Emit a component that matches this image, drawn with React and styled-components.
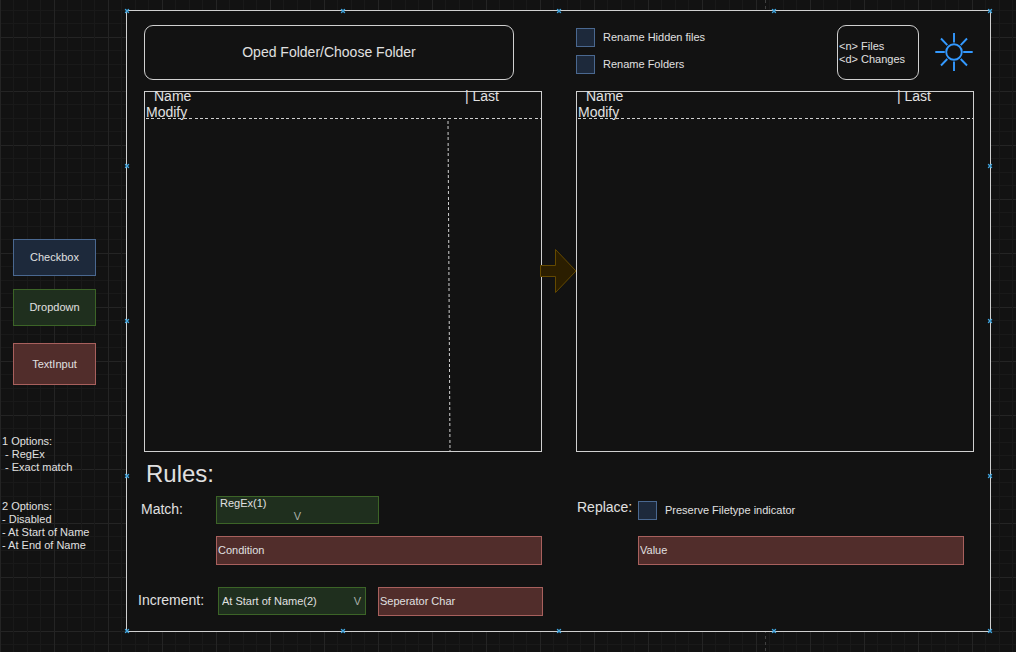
import React from "react";
import styled, { createGlobalStyle, css } from "styled-components";

const ink = "#e0e0e0";
const line = "#d0d0d0";
const canvas = "#121212";

const tones = {
  blue: { fill: "#1d293b", stroke: "#4a6890" },
  green: { fill: "#1f2f1e", stroke: "#3c6427" },
  red: { fill: "#512d2b", stroke: "#a8605d" },
};

const GlobalStyle = createGlobalStyle`
  *, *::before, *::after { box-sizing: border-box; }
  body {
    margin: 0;
    background: ${canvas};
    color: ${ink};
    font: 11px/13px "Liberation Sans", Arial, sans-serif;
  }
  button, input, select { font: inherit; color: inherit; margin: 0; border-radius: 0; }
`;

const gridLines = (direction) => css`
  linear-gradient(
    ${direction},
    #242424 0 1px, transparent 1px 13px,
    #191919 13px 14px, transparent 14px 27px,
    #191919 27px 28px, transparent 28px 40px,
    #191919 40px 41px, transparent 41px
  )
`;

const dashes = (direction) => css`
  repeating-linear-gradient(
    ${direction},
    ${line} 0 3px, transparent 3px 5px,
    ${line} 5px 8px, transparent 8px 11px,
    ${line} 11px 14px, transparent 14px 16px,
    ${line} 16px 19px, transparent 19px 22px,
    ${line} 22px 25px, transparent 25px 27px
  )
`;

const Page = styled.div`
  display: flex;
  min-height: 100vh;
  padding: 10px 25px 20px 0;
  background:
    repeating-linear-gradient(#404040 0 3px, transparent 3px 6px) 765px 0 / 1px 100% no-repeat,
    ${gridLines("to right")} 0 0 / 54px 54px,
    ${gridLines("to bottom")} 0 37px / 54px 54px,
    ${canvas};
`;

const Legend = styled.aside`
  flex: none;
  width: 126px;
  padding-top: 229px;
`;

const Swatch = styled.div`
  display: flex;
  align-items: center;
  justify-content: center;
  width: 83px;
  height: ${(p) => (p.$tall ? 42 : 37)}px;
  margin: 0 0 ${(p) => p.$after}px 13px;
  background: ${(p) => tones[p.$tone].fill};
  border: 1px solid ${(p) => tones[p.$tone].stroke};
`;

const Note = styled.p`
  margin: 0 0 26px 2px;
  white-space: pre;
`;

const Frame = styled.main`
  position: relative;
  flex: 1;
  display: flex;
  flex-direction: column;
  padding: 14px 16px 15px 17px;
  background: ${canvas};
  border: 1px solid ${line};
`;

const HandleMark = styled.svg`
  position: absolute;
  left: ${(p) => p.$x}%;
  top: ${(p) => p.$y}%;
  width: 5px;
  height: 5px;
  transform: translate(-50%, -50%);
`;

const Columns = styled.div`
  position: relative;
  display: grid;
  grid-template-columns: 1fr 1fr;
  column-gap: 34px;
  ${(p) => p.$grow && "flex: 1; min-height: 240px;"}
`;

const OpenButton = styled.button`
  width: 370px;
  max-width: 100%;
  height: 55px;
  padding: 0;
  background: transparent;
  border: 1px solid ${line};
  border-radius: 9px;
  font-size: 14px;
`;

const Toolbar = styled.div`
  display: flex;
  align-items: flex-start;
  margin-bottom: 11px;
`;

const Checks = styled.div`
  display: grid;
  gap: 8px;
  margin-right: auto;
  padding-top: 3px;
`;

const CheckLabel = styled.label`
  display: flex;
  align-items: center;
  gap: 8px;
`;

const Check = styled.input.attrs({ type: "checkbox" })`
  appearance: none;
  flex: none;
  width: 19px;
  height: 19px;
  background: ${tones.blue.fill};
  border: 1px solid ${tones.blue.stroke};
  &:checked { background: ${tones.blue.stroke}; }
`;

const Stats = styled.div`
  display: flex;
  flex-direction: column;
  justify-content: center;
  width: 82px;
  height: 55px;
  padding-left: 1px;
  border: 1px solid ${line};
  border-radius: 9px;
`;

const ThemeButton = styled.button`
  display: grid;
  place-items: center;
  width: 40px;
  height: 54px;
  margin-left: 15px;
  padding: 0;
  background: none;
  border: 0;
`;

const Panel = styled.section`
  display: flex;
  flex-direction: column;
  border: 1px solid ${line};
`;

const PanelHead = styled.header`
  display: grid;
  grid-template-columns: 1fr 76px;
  height: 27px;
  padding-left: 1px;
  font-size: 14px;
  line-height: 16px;
  background: ${dashes("to right")} 1px 26px / 100% 1px no-repeat;
`;

const NameHead = styled.span`
  padding-left: 8px;
  margin-top: -4px;
`;

const LastHead = styled.span`
  margin-top: -4px;
`;

const PanelBody = styled.div`
  flex: 1;
  display: flex;
  justify-content: flex-end;
  padding-right: 90px;
`;

const Divider = styled.svg`
  width: 4px;
  height: 100%;
`;

const Arrow = styled.svg`
  position: absolute;
  left: 50%;
  top: 50%;
  width: 38px;
  height: 46px;
  transform: translate(-50%, -50%);
`;

const Title = styled.h1`
  margin: 8px 0 8px 2px;
  font-size: 24px;
  line-height: 28px;
  font-weight: 400;
`;

const Rule = styled.div`
  display: grid;
  grid-template-columns: ${(p) => p.$label}px 1fr;
  grid-template-rows: 28px auto;
  align-content: start;
  row-gap: 12px;
  margin-left: ${(p) => (p.$outdent ? -3 : 0)}px;
  margin-right: ${(p) => p.$inset || 0}px;
`;

const RuleLabel = styled.label`
  font-size: 14px;
  line-height: 16px;
  padding-top: ${(p) => p.$top}px;
`;

const RuleGroup = styled.span`
  font-size: 14px;
  line-height: 16px;
  padding: 3px 0 0 1px;
`;

const Field = styled.input.attrs({ type: "text" })`
  grid-column: 2;
  width: 100%;
  min-width: 0;
  height: 29px;
  padding: 0 1px 1px;
  background: ${tones.red.fill};
  border: 1px solid ${tones.red.stroke};
  outline: 0;
  &::placeholder { color: ${ink}; opacity: 1; }
`;

const SelectBox = styled.div`
  position: relative;
  width: ${(p) => p.$width}px;
  height: 28px;
`;

const Select = styled.select`
  appearance: none;
  width: 100%;
  height: 100%;
  padding: 0 0 ${(p) => (p.$raised ? 13 : 0)}px 3px;
  background: ${tones.green.fill};
  border: 1px solid ${tones.green.stroke};
  outline: 0;
`;

const Caret = styled.span`
  position: absolute;
  right: ${(p) => (p.$low ? 78 : 5)}px;
  bottom: ${(p) => (p.$low ? 1 : 7)}px;
  color: #a9b0a8;
  pointer-events: none;
`;

const IncrementRow = styled.div`
  display: grid;
  grid-template-columns: 80px 148px 165px;
  justify-content: start;
  margin: 22px 0 0 -6px;
`;

const SeparatorSlot = styled.div`
  margin-left: 12px;
  width: 165px;
`;

const steps = [0, 25, 50, 75, 100];
const handles = steps.flatMap((a) =>
  steps.filter((b) => a % 100 === 0 || b % 100 === 0).map((b) => [a, b])
);

function Handle({ x, y }) {
  return (
    <HandleMark $x={x} $y={y} viewBox="0 0 5 5" aria-hidden="true">
      <path d="M.5 .5L4.5 4.5M4.5 .5L.5 4.5" stroke="#3fa3dc" strokeWidth="1.4" />
    </HandleMark>
  );
}

function Sun() {
  return (
    <svg width="40" height="40" viewBox="0 0 40 40" fill="none" stroke="#3399ff" strokeWidth="1.9" aria-hidden="true">
      <circle cx="20" cy="20" r="7.8" />
      <path d="M20 1v9.5M20 29.5V39M1.3 20h9.5M29.200 20h9.500M7 6.500l6.300 6.700M33 6.500l-6.300 6.700M7 33.500l6.300-6.500M33 33.500l-6.300-6.500" />
    </svg>
  );
}

function FilePanel({ label, divided }) {
  return (
    <Panel aria-label={label}>
      <PanelHead>
        <NameHead>Name</NameHead>
        <LastHead>| Last</LastHead>
        <span>Modify</span>
      </PanelHead>
      <PanelBody>
        {divided && (
          <Divider aria-hidden="true">
            <line x1="1" y1="2" x2="3" y2="100%" stroke={line} strokeDasharray="3 2 3 3 3 2 3 3 3 2" />
          </Divider>
        )}
      </PanelBody>
    </Panel>
  );
}

export default function App() {
  return (
    <Page>
      <GlobalStyle />
      <Legend>
        <Swatch $tone="blue" $after={13}>Checkbox</Swatch>
        <Swatch $tone="green" $after={17}>Dropdown</Swatch>
        <Swatch $tone="red" $tall $after={50}>TextInput</Swatch>
        <Note>{"1 Options:\n - RegEx\n - Exact match"}</Note>
        <Note>{"2 Options:\n- Disabled\n- At Start of Name\n- At End of Name"}</Note>
      </Legend>

      <Frame>
        <Columns>
          <Toolbar>
            <OpenButton type="button">Oped Folder/Choose Folder</OpenButton>
          </Toolbar>
          <Toolbar>
            <Checks>
              <CheckLabel><Check />Rename Hidden files</CheckLabel>
              <CheckLabel><Check />Rename Folders</CheckLabel>
            </Checks>
            <Stats>
              <span>&lt;n&gt; Files</span>
              <span>&lt;d&gt; Changes</span>
            </Stats>
            <ThemeButton type="button" aria-label="Toggle theme"><Sun /></ThemeButton>
          </Toolbar>
        </Columns>

        <Columns $grow>
          <FilePanel label="Current names" divided />
          <FilePanel label="New names" />
          <Arrow viewBox="0 0 38 46" aria-hidden="true">
            <path d="M.5 16.500H15.500V.5L36 22 15.500 43.500V27.500H.5Z" fill="#2b1e00" stroke="#644900" />
          </Arrow>
        </Columns>

        <Title>Rules:</Title>

        <Columns>
          <Rule $label={75} $outdent>
            <RuleLabel htmlFor="match" $top={5}>Match:</RuleLabel>
            <SelectBox $width={163}>
              <Select id="match" $raised>
                <option>RegEx(1)</option>
                <option>Exact match</option>
              </Select>
              <Caret $low aria-hidden="true">V</Caret>
            </SelectBox>
            <Field aria-label="Condition" placeholder="Condition" />
          </Rule>
          <Rule $label={62} $inset={10}>
            <RuleGroup>Replace:</RuleGroup>
            <CheckLabel><Check />Preserve Filetype indicator</CheckLabel>
            <Field aria-label="Value" placeholder="Value" />
          </Rule>
        </Columns>

        <IncrementRow>
          <RuleLabel htmlFor="increment" $top={5}>Increment:</RuleLabel>
          <SelectBox $width={148}>
            <Select id="increment" defaultValue="start">
              <option value="off">Disabled</option>
              <option value="start">At Start of Name(2)</option>
              <option value="end">At End of Name</option>
            </Select>
            <Caret aria-hidden="true">V</Caret>
          </SelectBox>
          <SeparatorSlot>
            <Field aria-label="Separator character" placeholder="Seperator Char" />
          </SeparatorSlot>
        </IncrementRow>

        {handles.map(([x, y]) => (
          <Handle key={`${x}-${y}`} x={x} y={y} />
        ))}
      </Frame>
    </Page>
  );
}
